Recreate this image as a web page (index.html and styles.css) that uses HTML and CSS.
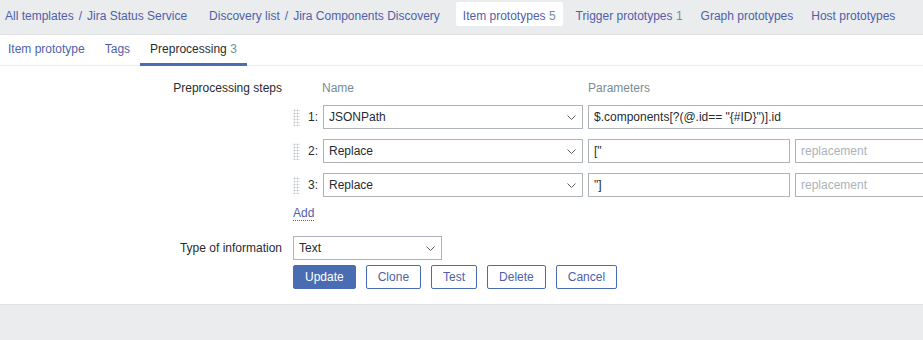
FILE: index.html
```html
<!DOCTYPE html>
<html lang="en">
<head>
<meta charset="UTF-8">
<title>Item prototype - Preprocessing</title>
<link rel="stylesheet" href="styles.css">
</head>
<body>
<div class="crumbs">
    <span class="crumb"><a href="#">All templates</a><span class="sep">/</span><a href="#">Jira Status Service</a></span>
    <span class="crumb"><a href="#">Discovery list</a><span class="sep">/</span><a href="#">Jira Components Discovery</a></span>
    <span class="crumb selected"><a href="#">Item prototypes</a> <span class="count">5</span></span>
    <span class="crumb"><a href="#">Trigger prototypes</a> <span class="count">1</span></span>
    <span class="crumb"><a href="#">Graph prototypes</a></span>
    <span class="crumb"><a href="#">Host prototypes</a></span>
</div>

<div class="tabs">
    <a href="#" class="tab">Item prototype</a>
    <a href="#" class="tab">Tags</a>
    <a href="#" class="tab active">Preprocessing <span class="count">3</span></a>
</div>

<form class="form">
    <label class="form-label">Preprocessing steps</label>
    <div class="steps">
        <div class="steps-head">
            <span class="head-name">Name</span>
            <span>Parameters</span>
        </div>

        <div class="step">
            <span class="handle"></span>
            <span class="num">1:</span>
            <span class="select wide">JSONPath
                <svg width="9" height="5" viewBox="0 0 9 5"><polyline points="0.5,0.5 4.5,4.5 8.5,0.5" fill="none" stroke="#555e66" stroke-width="1"/></svg>
            </span>
            <input type="text" class="field full" value='$.components[?(@.id== "{#ID}")].id'>
        </div>

        <div class="step">
            <span class="handle"></span>
            <span class="num">2:</span>
            <span class="select wide">Replace
                <svg width="9" height="5" viewBox="0 0 9 5"><polyline points="0.5,0.5 4.5,4.5 8.5,0.5" fill="none" stroke="#555e66" stroke-width="1"/></svg>
            </span>
            <input type="text" class="field" value='["'>
            <input type="text" class="field" placeholder="replacement">
        </div>

        <div class="step">
            <span class="handle"></span>
            <span class="num">3:</span>
            <span class="select wide">Replace
                <svg width="9" height="5" viewBox="0 0 9 5"><polyline points="0.5,0.5 4.5,4.5 8.5,0.5" fill="none" stroke="#555e66" stroke-width="1"/></svg>
            </span>
            <input type="text" class="field" value='"]'>
            <input type="text" class="field" placeholder="replacement">
        </div>

        <a href="#" class="add">Add</a>
    </div>

    <label class="form-label spaced">Type of information</label>
    <div class="spaced">
        <span class="select short">Text
            <svg width="9" height="5" viewBox="0 0 9 5"><polyline points="0.5,0.5 4.5,4.5 8.5,0.5" fill="none" stroke="#555e66" stroke-width="1"/></svg>
        </span>
    </div>

    <div></div>
    <div class="buttons">
        <button type="button" class="btn primary">Update</button>
        <button type="button" class="btn">Clone</button>
        <button type="button" class="btn">Test</button>
        <button type="button" class="btn">Delete</button>
        <button type="button" class="btn">Cancel</button>
    </div>
</form>

<div class="footer"></div>
</body>
</html>
```

FILE: styles.css
```css
* {
    margin: 0;
    padding: 0;
    box-sizing: border-box;
}
html, body {
    overflow: hidden;
}
body {
    background-color: #ebeced;
    color: #1f2c33;
    font-family: 'Liberation Sans', Arial, sans-serif;
    font-size: 12px;
}
a {
    color: #4f5fab;
    text-decoration: none;
}
.count {
    color: #768d99;
}

/* breadcrumbs */
.crumbs {
    display: flex;
    gap: 6px;
    height: 35px;
    padding-top: 2px;
    background-color: #ebeced;
    border-bottom: 1px solid #dfe1e3;
    white-space: nowrap;
    overflow: hidden;
}
.crumb {
    height: 24px;
    padding: 7px 7px 3px;
    line-height: 14px;
    border-radius: 2px;
}
.crumb:first-child {
    padding-left: 5px;
}
.crumb:nth-child(2) {
    margin-left: 2px;
}
.crumb:nth-child(3) {
    margin-left: 3px;
}
.crumb:nth-child(5) {
    margin-left: -2px;
}
.crumb:nth-child(6) {
    margin-left: -2px;
}
.crumb.selected {
    background-color: #ffffff;
}
.sep {
    margin: 0 5px;
    color: #4f5fab;
}

/* tabs */
.tabs {
    display: flex;
    height: 31px;
    background-color: #ffffff;
    border-bottom: 1px solid #ebeced;
}
.tab {
    display: block;
    height: 31px;
    padding: 0 10px;
    line-height: 29px;
    margin-bottom: -1px;
}
.tab:first-child {
    padding-left: 8px;
}
.tab.active {
    color: #1f2c33;
    border-bottom: 3px solid #4a6cb3;
}

/* form */
.form {
    display: grid;
    grid-template-columns: 282px minmax(0, 1fr);
    column-gap: 11px;
    padding: 10px 0 15px;
    background-color: #ffffff;
    border-bottom: 1px solid #dfe1e3;
}
.form-label {
    text-align: right;
    line-height: 24px;
    white-space: nowrap;
}
.spaced {
    margin-top: 15px;
}
.steps {
    overflow: hidden;
}
.steps-head {
    display: flex;
    height: 24px;
    line-height: 24px;
    margin-bottom: 5px;
    padding-left: 29px;
    color: #768d99;
}
.head-name {
    width: 266px;
}
.step {
    display: flex;
    align-items: center;
    height: 24px;
    white-space: nowrap;
}
.step + .step {
    margin-top: 10px;
}
.handle {
    flex: none;
    width: 7px;
    height: 17px;
    margin-right: 7px;
    background-image: radial-gradient(#c2c8cc 0.9px, transparent 1.1px);
    background-size: 3px 3px;
}
.num {
    flex: none;
    width: 16px;
    padding-left: 1px;
}
.select {
    flex: none;
    display: inline-flex;
    align-items: center;
    justify-content: space-between;
    height: 24px;
    padding: 0 6px 0 5px;
    border: 1px solid #aeb4b9;
    background-color: #ffffff;
    color: #1f2c33;
}
.select.wide {
    width: 260px;
    margin-right: 5px;
}
.select.short {
    width: 149px;
}
.select svg {
    margin-top: 1px;
}
.field {
    flex: none;
    width: 202px;
    height: 24px;
    padding: 0 5px;
    margin-right: 5px;
    border: 1px solid #aeb4b9;
    font-family: inherit;
    font-size: 12px;
    color: #1f2c33;
    outline: none;
}
.field.full {
    width: 409px;
}
.field::placeholder {
    color: #acb3b8;
}
.add {
    display: inline-block;
    margin-top: 9px;
    line-height: 14px;
    border-bottom: 1px dotted #4f5fab;
}

/* buttons */
.buttons {
    display: flex;
    gap: 10px;
    margin-top: 5px;
}
.btn {
    height: 24px;
    padding: 0 11px;
    border: 1px solid #4a6cb3;
    border-radius: 2px;
    background-color: #ffffff;
    color: #4f5fab;
    font-family: inherit;
    font-size: 12px;
    cursor: pointer;
}
.btn.primary {
    background-color: #4a6cb3;
    color: #ffffff;
}

.footer {
    height: 40px;
    background-color: #ebeced;
}
```
